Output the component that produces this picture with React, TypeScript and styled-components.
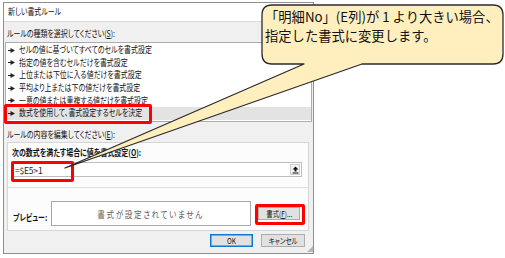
import styled, { createGlobalStyle } from "styled-components";

const GlobalStyle = createGlobalStyle`
  html, body {
    margin: 0;
    padding: 0;
    background: #ffffff;
  }
  body {
    font-family: "Noto Sans CJK JP", "Noto Sans", sans-serif;
    color: #1a1a1a;
  }
`;

const Page = styled.div`
  position: relative;
  width: 505px;
  height: 258px;
  overflow: hidden;
`;

const Dialog = styled.div`
  margin: 2px 0 0 3px;
  width: 311px;
  height: 252px;
  box-sizing: border-box;
  border: 1px solid #8f8f8f;
  background: #f0f0f0;
  display: flex;
  flex-direction: column;
`;

const TitleBar = styled.div`
  height: 18px;
  background: #ffffff;
  border-bottom: 1px solid #dadada;
  display: flex;
  align-items: center;
  padding-left: 4px;
`;

// screenshot was squeezed horizontally, so text is narrowed the same way
const Narrow = styled.span<{ $size?: number; $bold?: boolean; $color?: string }>`
  display: inline-block;
  white-space: nowrap;
  font-size: ${({ $size }) => $size ?? 8.7}px;
  font-weight: ${({ $bold }) => ($bold ? 700 : 400)};
  color: ${({ $color }) => $color ?? "#111"};
  font-feature-settings: "palt";
  transform: scaleX(0.8);
  transform-origin: left center;
  line-height: 12px;
`;

const SectionLabel = styled.div<{ $top: number }>`
  height: 12px;
  margin: ${({ $top }) => $top}px 0 0 3px;
  display: flex;
  align-items: center;
`;

const RuleList = styled.div`
  margin: 2px 0 0 1px;
  width: 307px;
  height: 80px;
  box-sizing: border-box;
  border: 1px solid #acacac;
  background: #ffffff;
  padding-top: 1px;
`;

const Row = styled.div<{ $selected?: boolean }>`
  position: relative;
  height: 12.6px;
  display: flex;
  align-items: center;
  gap: 4px;
  padding-left: 2px;
  background: ${({ $selected }) => ($selected ? "#e3e3e3" : "transparent")};
`;

const RedFrame = styled.div<{ $l: number; $t: number; $w: number; $h: number }>`
  position: absolute;
  left: ${({ $l }) => $l}px;
  top: ${({ $t }) => $t}px;
  width: ${({ $w }) => $w}px;
  height: ${({ $h }) => $h}px;
  box-sizing: border-box;
  border: 3px solid #ff0000;
  border-radius: 2px;
  pointer-events: none;
`;

const RuleBox = styled.div`
  margin: 1px 0 0 3px;
  width: 302px;
  height: 89px;
  box-sizing: border-box;
  border: 1px solid #d6d6d6;
  background: #fcfcfc;
  display: flex;
  flex-direction: column;
`;

const BoxLabel = styled.div`
  height: 12px;
  margin: 4px 0 0 4px;
  display: flex;
  align-items: center;
`;

const Formula = styled.div`
  position: relative;
  margin: 3px 0 0 4px;
  width: 290px;
  height: 15px;
  box-sizing: border-box;
  border: 1px solid #bdbdbd;
  background: #ffffff;
  display: flex;
  align-items: center;
  justify-content: space-between;
  padding: 0 1px 0 2px;
`;

const FormulaText = styled.span`
  font-family: "Noto Sans CJK JP", sans-serif;
  font-size: 8.5px;
  letter-spacing: -0.2px;
  color: #222;
`;

const CollapseButton = styled.div`
  width: 10px;
  height: 11px;
  box-sizing: border-box;
  border: 1px solid #cfcfcf;
  background: #f4f4f4;
  display: flex;
  align-items: center;
  justify-content: center;
`;

const Divider = styled.div`
  margin-top: 10px;
  height: 1px;
  background: #dedede;
`;

const PreviewRow = styled.div`
  margin: 13px 0 0 5px;
  display: flex;
  align-items: center;
`;

const PreviewLabel = styled.div`
  width: 38px;
`;

const PreviewBox = styled.div`
  width: 200px;
  height: 25px;
  box-sizing: border-box;
  border: 1px solid #a8a8a8;
  background: #ffffff;
  display: flex;
  align-items: center;
  justify-content: center;
`;

const CenteredNarrow = styled(Narrow)`
  transform-origin: center center;
  letter-spacing: 2px;
`;

const Button = styled.div<{ $primary?: boolean; $w: number }>`
  position: relative;
  width: ${({ $w }) => $w}px;
  height: 13px;
  box-sizing: border-box;
  border: 1px solid ${({ $primary }) => ($primary ? "#0a78d4" : "#adadad")};
  box-shadow: ${({ $primary }) => ($primary ? "inset 0 0 0 0.5px #0a78d4" : "none")};
  background: #e1e1e1;
  display: flex;
  align-items: center;
  justify-content: center;
`;

const ButtonText = styled(Narrow)`
  transform-origin: center center;
  font-size: 8px;
`;

const FormatButtonWrap = styled.div`
  margin-left: 7px;
`;

const Footer = styled.div`
  margin-top: 3px;
  display: flex;
  justify-content: flex-end;
  gap: 8px;
  padding-right: 8px;
`;

const Grip = styled.div`
  position: absolute;
  left: 307px;
  top: 246px;
  width: 6px;
  height: 6px;
  background-image: radial-gradient(circle, #b5b5b5 0.7px, transparent 0.9px);
  background-size: 2px 2px;
  clip-path: polygon(100% 0, 100% 100%, 0 100%);
`;

const CalloutLayer = styled.svg`
  position: absolute;
  left: 0;
  top: 0;
  pointer-events: none;
`;

const CalloutText = styled.div`
  position: absolute;
  left: 265px;
  top: 7px;
  font-family: "Noto Sans CJK JP", sans-serif;
  font-size: 13.3px;
  line-height: 19px;
  color: #111;
  white-space: nowrap;
`;

const rules = [
  "セルの値に基づいてすべてのセルを書式設定",
  "指定の値を含むセルだけを書式設定",
  "上位または下位に入る値だけを書式設定",
  "平均より上または下の値だけを書式設定",
  "一意の値または重複する値だけを書式設定",
  "数式を使用して、書式設定するセルを決定",
];

function Pointer() {
  return (
    <svg width="7" height="5" viewBox="0 0 7 5">
      <rect x="0" y="2" width="3" height="1" fill="#222" />
      <path d="M2.5 0 L7 2.5 L2.5 5 Z" fill="#222" />
    </svg>
  );
}

export default function App() {
  return (
    <Page>
      <GlobalStyle />
      <Dialog>
        <TitleBar>
          <Narrow>新しい書式ルール</Narrow>
        </TitleBar>

        <SectionLabel $top={6}>
          <Narrow>
            ルールの種類を選択してください(<u>S</u>):
          </Narrow>
        </SectionLabel>

        <RuleList>
          {rules.map((r, i) => {
            const selected = i === rules.length - 1;
            return (
              <Row key={r} $selected={selected}>
                <Pointer />
                <Narrow>{r}</Narrow>
                {selected && <RedFrame $l={-2} $t={-3} $w={148} $h={20} />}
              </Row>
            );
          })}
        </RuleList>

        <SectionLabel $top={7}>
          <Narrow>
            ルールの内容を編集してください(<u>E</u>):
          </Narrow>
        </SectionLabel>

        <RuleBox>
          <BoxLabel>
            <Narrow $bold>
              次の数式を満たす場合に値を書式設定(<u>O</u>):
            </Narrow>
          </BoxLabel>
          <Formula>
            <FormulaText>=$E5&gt;1</FormulaText>
            <CollapseButton>
              <svg width="7" height="8" viewBox="0 0 7 8">
                <path d="M3.5 0.5 L6.5 3.5 H4.5 V5.5 H2.5 V3.5 H0.5 Z" fill="#111" />
                <rect x="0.5" y="6.5" width="6" height="1" fill="#111" />
              </svg>
            </CollapseButton>
            <RedFrame $l={-2} $t={-2} $w={63} $h={21} />
          </Formula>
          <Divider />
          <PreviewRow>
            <PreviewLabel>
              <Narrow $bold>プレビュー:</Narrow>
            </PreviewLabel>
            <PreviewBox>
              <CenteredNarrow $size={9.5} $color="#5f5f5f">
                書式が設定されていません
              </CenteredNarrow>
            </PreviewBox>
            <FormatButtonWrap>
              <Button $w={42}>
                <ButtonText>
                  書式(<u>F</u>)...
                </ButtonText>
                <RedFrame $l={-4} $t={-4} $w={50} $h={21} />
              </Button>
            </FormatButtonWrap>
          </PreviewRow>
        </RuleBox>

        <Footer>
          <Button $primary $w={43}>
            <ButtonText>OK</ButtonText>
          </Button>
          <Button $w={44}>
            <ButtonText>キャンセル</ButtonText>
          </Button>
        </Footer>
      </Dialog>
      <Grip />

      <CalloutLayer width="505" height="258" viewBox="0 0 505 258">
        <path
          d="M272 5 H493 Q503 5 503 15 V54 Q503 64 493 64 H362 L65 168 L304 64 H272 Q262 64 262 54 V15 Q262 5 272 5 Z"
          fill="#ffefbf"
          stroke="#2b2b2b"
          strokeWidth="1.3"
          strokeLinejoin="round"
        />
      </CalloutLayer>
      <CalloutText>
        「明細No」(E列)が 1 より大きい場合、
        <br />
        指定した書式に変更します。
      </CalloutText>
    </Page>
  );
}
